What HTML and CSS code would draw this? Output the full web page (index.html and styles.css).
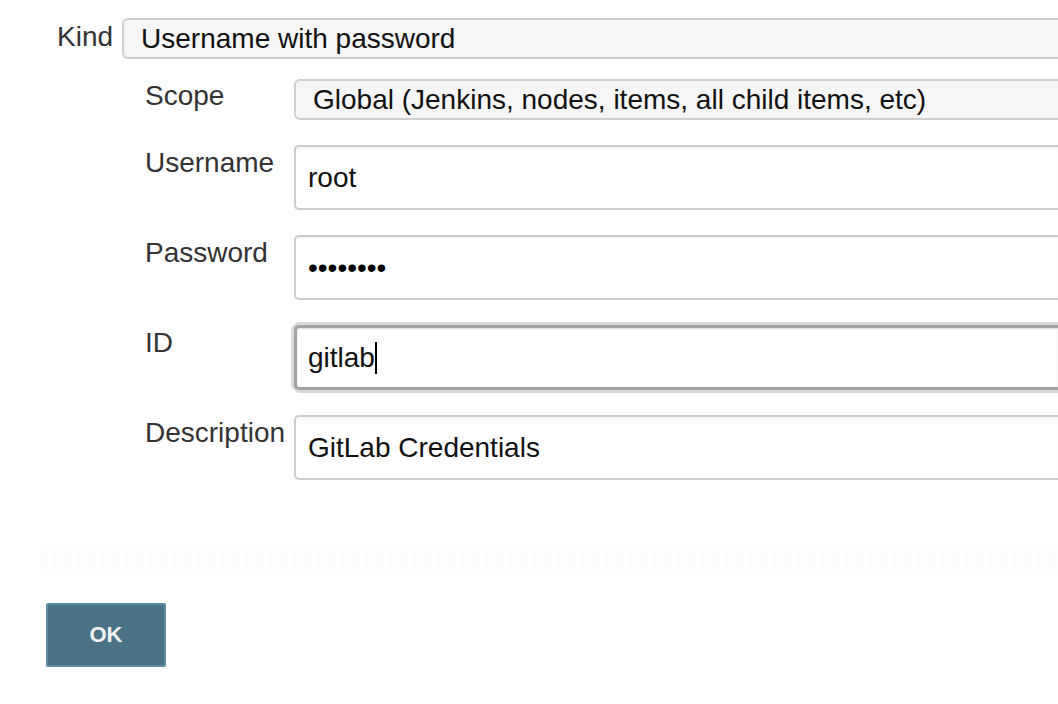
FILE: index.html
```html
<!DOCTYPE html>
<html lang="en">
<head>
<meta charset="utf-8">
<title>Credentials</title>
<link rel="stylesheet" href="styles.css">
</head>
<body>
<div class="page">
  <div class="kind-row">
    <div class="kind-label">Kind</div>
    <div class="select kind-select">Username with password</div>
  </div>
  <div class="fields">
    <div class="label scope-label">Scope</div>
    <div class="select scope-select">Global (Jenkins, nodes, items, all child items, etc)</div>

    <div class="label">Username</div>
    <div class="input">root</div>

    <div class="label">Password</div>
    <div class="input password">••••••••</div>

    <div class="label">ID</div>
    <div class="input focused">gitlab<span class="caret"></span></div>

    <div class="label">Description</div>
    <div class="input">GitLab Credentials</div>
  </div>
  <div class="band"></div>
  <div class="actions">
    <button class="ok" type="button">OK</button>
  </div>
</div>
</body>
</html>
```
FILE: styles.css
```css
html, body {
  margin: 0;
  padding: 0;
  background: #ffffff;
  overflow: hidden;
}
body {
  font-family: "Liberation Sans", Arial, Helvetica, sans-serif;
  font-size: 28px;
  color: #333333;
}
.page {
  width: 100%;
  padding-top: 18px;
  overflow: hidden;
}
.kind-row {
  display: flex;
  align-items: flex-start;
  padding-left: 57px;
  gap: 9px;
}
.kind-label {
  line-height: 32px;
  padding-top: 3px;
}
.select {
  flex: 1;
  min-width: 0;
  box-sizing: border-box;
  height: 41px;
  border: 2px solid #cfcfcf;
  border-right: 0;
  border-radius: 6px 0 0 6px;
  background: #f6f6f6;
  color: #111111;
  line-height: 37px;
  padding-left: 17px;
  white-space: nowrap;
  overflow: hidden;
}
.fields {
  display: grid;
  grid-template-columns: 149px minmax(0, 1fr);
  margin-left: 145px;
  margin-top: 20px;
  row-gap: 25px;
}
.label {
  line-height: 32px;
  padding-top: 2px;
  white-space: nowrap;
}
.scope-label {
  padding-top: 1px;
}
.input {
  box-sizing: border-box;
  height: 65px;
  border: 2px solid #cccccc;
  border-right: 0;
  border-radius: 5px 0 0 5px;
  background: #ffffff;
  box-shadow: inset 0 2px 2px rgba(0, 0, 0, 0.04);
  color: #111111;
  line-height: 61px;
  padding-left: 12px;
  white-space: nowrap;
  overflow: hidden;
}
.password {
  color: #000000;
}
.focused {
  border: 3px solid #a4a4a4;
  border-right: 0;
  box-shadow: -3px 0 0 0 #dadada, 0 -3px 0 0 #dadada, 0 3px 0 0 #dadada, inset 0 1px 2px rgba(0, 0, 0, 0.15);
  line-height: 59px;
  padding-left: 11px;
  overflow: visible;
}
.caret {
  display: inline-block;
  width: 2px;
  height: 32px;
  background: #000000;
  vertical-align: middle;
  position: relative;
  top: -2px;
}
.band {
  margin-top: 66px;
  margin-left: 40px;
  height: 28px;
  background: repeating-linear-gradient(90deg, #fcfcfc 0 6px, #fefefe 6px 12px);
}
.actions {
  padding-left: 46px;
  margin-top: 29px;
}
.ok {
  box-sizing: border-box;
  width: 120px;
  height: 64px;
  border: 2px solid #5b8ba1;
  border-radius: 2px;
  background: #4b7387;
  color: #f2f2f2;
  font-family: "Liberation Sans", Arial, sans-serif;
  font-weight: bold;
  font-size: 22px;
  padding: 0;
  cursor: pointer;
}
```
